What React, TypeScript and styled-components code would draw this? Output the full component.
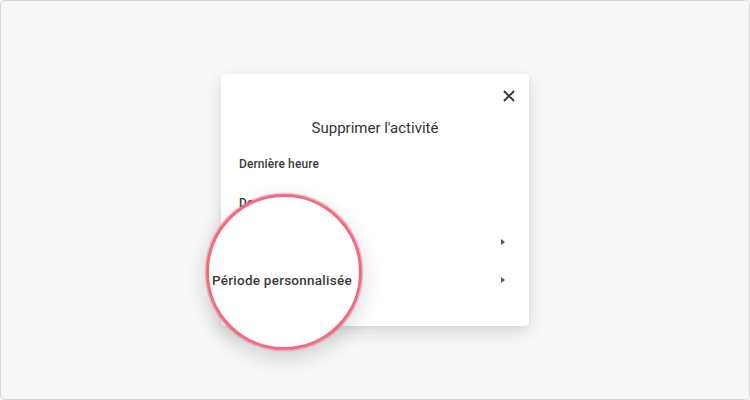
import React from 'react';
import styled, { createGlobalStyle } from 'styled-components';

const GlobalStyle = createGlobalStyle`
    html, body {
        margin: 0;
        padding: 0;
        background: #ffffff;
    }
    * {
        box-sizing: border-box;
    }
`;

const Frame = styled.div`
    width: 750px;
    height: 400px;
    border: 1px solid #d9d9d9;
    border-radius: 4px;
    background: #f7f7f7;
    display: flex;
    align-items: center;
    justify-content: center;
    font-family: Roboto, 'Noto Sans', sans-serif;
    color: #333333;
`;

const Dialog = styled.div`
    position: relative;
    width: 308px;
    height: 252px;
    background: #ffffff;
    border-radius: 4px;
    box-shadow: 0 6px 18px rgba(0, 0, 0, 0.12), 0 1px 4px rgba(0, 0, 0, 0.06);
    display: flex;
    flex-direction: column;
    padding: 14px 0 0;
`;

const TopBar = styled.div`
    display: flex;
    justify-content: flex-end;
    padding-right: 12px;
    height: 16px;
`;

const CloseButton = styled.button`
    border: none;
    background: none;
    padding: 0;
    width: 16px;
    height: 16px;
    display: flex;
    align-items: center;
    justify-content: center;
    cursor: pointer;
`;

const Title = styled.h2`
    margin: 14px 0 0;
    font-size: 15px;
    font-weight: 400;
    text-align: center;
    color: #333333;
    line-height: 20px;
`;

const List = styled.ul`
    list-style: none;
    margin: 19px 0 0;
    padding: 0;
`;

const Row = styled.li`
    height: 38.4px;
    display: flex;
    align-items: center;
    justify-content: space-between;
    padding: 0 24px 0 18px;
    font-size: 12px;
    letter-spacing: 0.1px;
    font-weight: 500;
    color: #3c3c3c;
    &:first-child {
        height: 27px;
        align-items: flex-start;
    }
`;

const Arrow = styled.span`
    width: 0;
    height: 0;
    border-top: 3.5px solid transparent;
    border-bottom: 3.5px solid transparent;
    border-left: 4px solid #555555;
`;

const Magnifier = styled.div`
    position: absolute;
    left: -15px;
    top: 120px;
    width: 156px;
    height: 156px;
    border-radius: 50%;
    background: #ffffff;
    border: 3px solid #f26a7d;
    box-shadow: 0 0 0 1.5px rgba(242, 106, 125, 0.35), 0 8px 22px rgba(0, 0, 0, 0.16);
    display: flex;
    align-items: center;
    padding: 15px 0 0 3px;
    overflow: hidden;
`;

const MagnifiedText = styled.span`
    font-size: 13.5px;
    letter-spacing: 0.25px;
    font-weight: 500;
    color: #3a3a3a;
    white-space: nowrap;
`;

const rows = [
    { label: 'Dernière heure', arrow: false },
    { label: 'Dernier jour', arrow: false },
    { label: 'Toutes les données', arrow: true },
    { label: 'Période personnalisée', arrow: true },
];

const App: React.FC = () => {
    return (
        <>
            <GlobalStyle />
            <Frame>
                <Dialog>
                    <TopBar>
                        <CloseButton aria-label='Fermer'>
                            <svg width='12' height='12' viewBox='0 0 12 12'>
                                <path d='M1 1L11 11M11 1L1 11' stroke='#333333' strokeWidth='1.9' />
                            </svg>
                        </CloseButton>
                    </TopBar>
                    <Title>Supprimer l'activité</Title>
                    <List>
                        {rows.map(row => (
                            <Row key={row.label}>
                                <span>{row.label}</span>
                                {row.arrow && <Arrow />}
                            </Row>
                        ))}
                    </List>
                    <Magnifier>
                        <MagnifiedText>Période personnalisée</MagnifiedText>
                    </Magnifier>
                </Dialog>
            </Frame>
        </>
    );
};

export default App;
